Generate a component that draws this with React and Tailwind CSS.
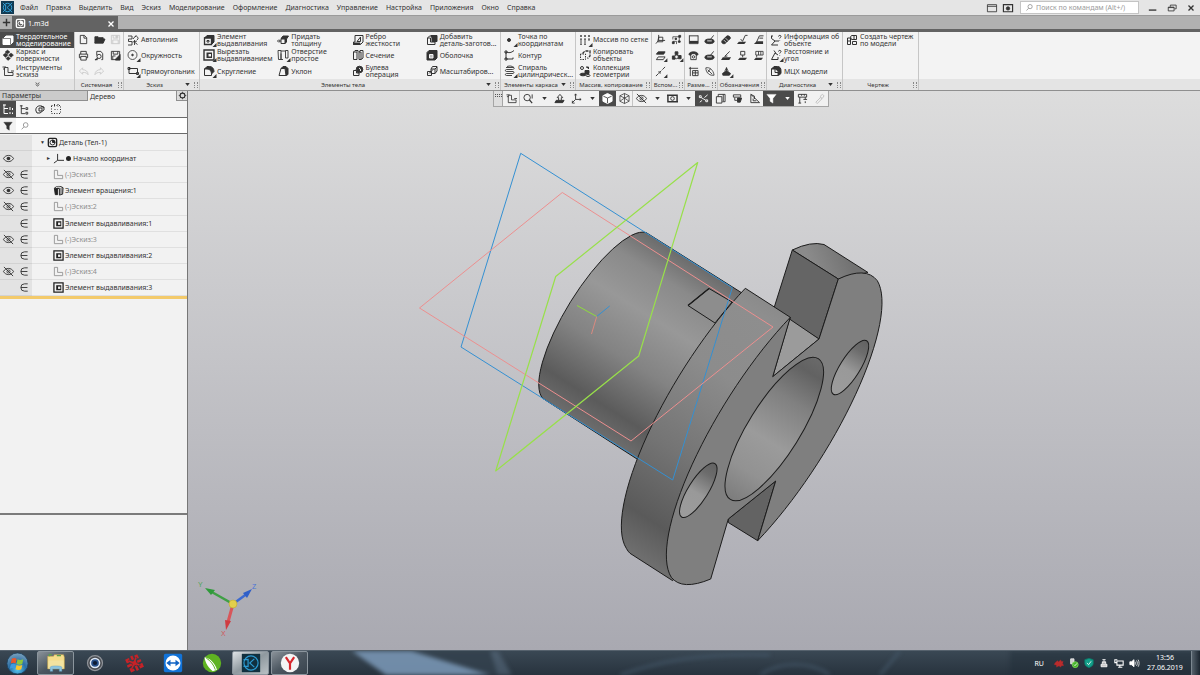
import clsx from 'clsx';

// 12x12 drawings, stroked with the current colour
const icons = {
  solid: (
    <>
      <path d="M1.5 4.5 4 2h7v6l-2.5 2.5" fill="currentColor" />
      <path d="M1 4.5h7v6H1z" fill="currentColor" />
      <path d="M1 4.5h7.5v6" stroke="#4b4b4b" strokeWidth=".7" />
    </>
  ),
  surfaces: <path d="m5.5 1 2.5 2-2.500 2L3 3zM9 4l2.500 2L9 8.500 6.500 6zM3.500 4 6 6 3.500 8.500 1 6zM6 7.500l2.500 2L6 11.500l-2-2z" fill="currentColor" strokeWidth=".4" />,
  sketchTools: <path d="M2.5 2.500v8h8.500V7.500H6V2.500zM.500 2h3.500M1 4h2M9 6h3" strokeWidth=".9" />,
  fileNew: <path d="M2.5 1.5H7L9.500 4v6.500h-7zM6.500 1.500v3h3" />,
  folder: <path d="M1 10V3h3.500l1 1H10v1.500M1 10l2-4.500h9L10 10z" fill="currentColor" />,
  save: (
    <>
      <path d="M1.5 1.5h9v9h-9zM3.5 1.5v3h5v-3M3 10.5v-4h6v4" />
      <path d="M6.5 2H8v2H6.500z" fill="currentColor" />
    </>
  ),
  print: <path d="M3 4.5v-3h6v3M3 8.5H1.5v-4h9v4H9M3 7h6v4H3z" />,
  preview: (
    <>
      <path d="M3 6V1.5h4.500L9.500 4v6.500H8M1 10.500h3" />
      <circle cx="5.5" cy="7" r="2.3" />
      <path d="m4 9-2.500 2" strokeWidth="1.5" />
    </>
  ),
  saveAs: (
    <>
      <path d="M1.5 1.5h9v9h-9zM3.5 1.5v3h5v-3M3 10.5v-4h3" />
      <path d="m6 10 5-5v6H6z" fill="currentColor" />
    </>
  ),
  undo: <path d="M5 2 1.5 5.5 5 9V7c3 0 5 .5 6 2.5C11 6 8.5 4 5 4z" />,
  redo: <path d="m7 2 3.500 3.500L7 9V7c-3 0-5 .5-6 2.500C1 6 3.500 4 7 4z" />,
  autoline: <path d="M1 2h4v3H1.500v2.500H5V11H1M6 5l3-3.500M5.500 8 10 7M8 2.500a2 2 0 1 1 2 3.500M8 8.500l2.500 2M7.500 11V6" strokeWidth=".9" />,
  circle: (
    <>
      <circle cx="5.5" cy="6" r="4.5" strokeWidth=".8" />
      <circle cx="5.5" cy="6" r=".8" fill="currentColor" />
    </>
  ),
  rect: <path d="M2 3.500h8.500v5H2zM1 2.500h2v2H1zM9.500 7.500h2v2h-2z" />,
  extrude: (
    <>
      <path d="M1.5 4 4 1.5h7V8l-2.500 2.500V4z" fill="currentColor" />
      <path d="M1.5 4h7v6.500h-7z" fill="#f3f3f3" strokeWidth="1.300" />
      <path d="M4 6.500h2v1.500H4z" />
    </>
  ),
  cutExtrude: (
    <>
      <path d="M1 1h10v10H1z" fill="#f3f3f3" strokeWidth="1.400" />
      <path d="M3.500 3.500h5.500V9H3.500z" fill="currentColor" stroke="none" />
      <path d="M5.500 5H8v2.500H5.500z" fill="#f3f3f3" stroke="none" />
    </>
  ),
  fillet: (
    <>
      <path d="M1.5 4 4 1.5h2.500C9.500 1.500 11 4 11 6.500L8.500 9C8.500 6 7 4 4.500 4z" fill="currentColor" />
      <path d="M1.5 10.500V4H4c3 0 4.500 2 4.500 5v1.500z" fill="#f3f3f3" />
    </>
  ),
  thicken: (
    <>
      <path d="M4 4.500 6 2h5.500l-2 3v3L8 9.500V5z" fill="currentColor" />
      <path d="M4 5h4v4.500H4zM0 7h3M2 5.500 3.500 7 2 8.500" fill="#f3f3f3" />
    </>
  ),
  hole: <path d="M1 1.500h3v9H1.500zM8.500 1.500H11V9H8.500zM4 4.500v6h2M4 2h4.500" strokeWidth=".9" />,
  draft: (
    <>
      <path d="M4 3.500 6 1.500h3l2 2v6l-2 1-1-7z" fill="currentColor" />
      <path d="m2 10.500 2-7h4l1 7z" fill="#f3f3f3" />
    </>
  ),
  rib: (
    <>
      <path d="M3 1.500h8V8l-2.500 2.500h-7V8H3z" />
      <path d="M5 7.500 8.500 3v4.500z" />
      <path d="M1.500 9H8v1.500H1.500z" fill="currentColor" />
    </>
  ),
  section: <path d="M1.500 3h3.500v7.500H1.500zM1.500 3 3 1.500h3V3M7 3h2v7.500H7zM7 3l1-1.500h3V9l-2 1.500" />,
  boolean: (
    <>
      <circle cx="7.500" cy="4.500" r="3.300" fill="currentColor" />
      <path d="M1.500 5.500h3V8H7v2.500H1.500z" fill="#f3f3f3" />
      <path d="M7 3a2.500 2.500 0 0 1 1.500 3" stroke="#f3f3f3" />
    </>
  ),
  addPart: (
    <>
      <path d="M1.500 4 3.500 2H6" />
      <path d="M5 1.500h6v6H6V4z" fill="currentColor" />
      <path d="M1.500 4h3v4h4.500v2.500H1.500z" fill="#f3f3f3" />
    </>
  ),
  shell: (
    <>
      <path d="M1 3.500 3 1.500h8V9l-2 2H1z" fill="currentColor" />
      <path d="M3.500 5.500h3.500V9H3.500z" fill="#bbb" stroke="#f3f3f3" />
    </>
  ),
  scale: <path d="M1.500 6.500h4v4h-4zM5 4l1.500-2.500H11V6L9 8.500H5zM5 4h4v4.500M9 4l2-2M3 8.500l4-4" />,
  point: <circle cx="5" cy="6" r="1.500" fill="currentColor" />,
  contour: <path d="M2 3c3 1 5 1 8-1.500M2 3v7h7V8.500M1 2h2v2H1zM1 9h2v2H1z" />,
  spiral: <path d="M2 2.500h7.500c1 0 1 2-1 2h-6c-1.500 0-1.500 2 0 2H9c1.500 0 1 2 0 2H2.500c-1.500 0-1.500 2 0 2H8M3 1.500c3-1 5-.5 7 1" strokeWidth=".9" />,
  gridArray: <path d="M1 2h2M5 2h2M9 2h2M1 6h2M5 6h2M9 6h2M1 10h2M5 10h2M2 1v10M6 1v10M10 1v6" strokeDasharray="2 1" strokeWidth=".9" />,
  copy: (
    <>
      <path d="M1.500 5v5.500h5V5z" strokeDasharray="1.500 1" />
      <path d="M3.500 4.500 6 2h5v5L8.500 9.500" strokeWidth="1.300" strokeDasharray="3 1" />
    </>
  ),
  collection: (
    <>
      <circle cx="3" cy="3" r="1.500" />
      <path d="M7 2h2.500v2M6 5.500h4v3H6z" fill="currentColor" />
      <ellipse cx="4" cy="9.500" rx="3" ry="1.300" fill="currentColor" />
      <ellipse cx="9" cy="10.500" rx="2" ry="1" />
    </>
  ),
  axisPoint: <path d="M4 1v6l-3 3.500M4 7h7M4 3.500h4.500v5H3z" />,
  localCs: (
    <>
      <path d="M2 6V3h7M2 8h4v3M9 3v6" strokeWidth=".8" />
      <path d="M8.500 1.500h2v2h-2zM1.500 8.500h2v2h-2zM8 7.500h2v1.500H8zM4.500 4.500H6V6H4.500z" fill="currentColor" />
    </>
  ),
  offsetPlane: (
    <>
      <path d="M3.500 2H11L9.500 4.500h-8z" fill="currentColor" />
      <path d="M3.500 7.500H11L9 10.500H1.500z" />
    </>
  ),
  control: (
    <>
      <path d="M4.500 2h3v3h-3zM1.500 6.500h3V10h-3zM8 6h3v3.500H8z" fill="currentColor" />
      <circle cx="6" cy="7.500" r="2" fill="#f3f3f3" />
    </>
  ),
  lineAxis: <path d="m1 11 3-3M5 7l2-2M8 4l3-3M3.500 6.500h2v2" />,
  linear: (
    <>
      <path d="M1.500 1.500v9h9.500v-9M1.500 2H11" />
      <path d="M1.500 7.500H11V10H1.500z" fill="currentColor" stroke="none" />
    </>
  ),
  diameter: (
    <>
      <ellipse cx="6" cy="8" rx="5" ry="2.500" fill="currentColor" />
      <path d="M3.500 7.500h5" stroke="#eee" />
      <path d="m7 6 3.500-4.500" />
    </>
  ),
  phone: (
    <>
      <path d="M1 5c0-4 10-4 10 0L9 6 8 4H4L3 6z" fill="currentColor" />
      <path d="M3 6v4.500h6V6" />
      <circle cx="6" cy="7.500" r="1.300" />
    </>
  ),
  dimTable: <path d="M1 2.500h10M2.500 1v10M5 5h6v5.500H5zM5 7.500h6M8 5v5.500" />,
  leaf: <path d="M2 2c4-1 8 2 9 8-4 1-9-2-9-8zM4 4l5 5M7 3 4 7" strokeWidth=".9" />,
  thread: (
    <>
      <path d="M1 7.500 6 2.500c1.500-1.500 5 .5 4 2.500l-5 5C3 11.500 0 10 1 7.500z" fill="currentColor" />
      <path d="m3 6.500 3 3M5 4.500l3 3" stroke="#ccc" />
    </>
  ),
  rough: (
    <>
      <path d="M4 5.500 6 8l3-6.500h2.500" />
      <path d="M2 8.500h8L8 11H0z" fill="currentColor" stroke="none" />
    </>
  ),
  leader: (
    <>
      <path d="M4 8.500 7 2h4.500M7 4.500h4" />
      <path d="M4 8h7v3H1z" fill="currentColor" stroke="none" />
    </>
  ),
  mark: (
    <>
      <path d="M4 7 9.500 1.500M4 7l3-.5" />
      <path d="M2 8h9l-2 3H0z" fill="currentColor" stroke="none" />
    </>
  ),
  base: (
    <>
      <path d="M4 1.500h4.500v4H4zM6.200 5.500V8" />
      <path d="M3 8.500h8l-2 2.500H1z" fill="currentColor" stroke="none" />
    </>
  ),
  tolerance: (
    <>
      <path d="M3 1.500h8v4H3zM6 1.500v4M8.500 1.500v4M4 5.500V8" strokeWidth=".9" />
      <path d="M3 8.500h8l-2 2.500H1z" fill="currentColor" stroke="none" />
    </>
  ),
  flatPattern: (
    <>
      <path d="M6 1.500v5M4 6l2-4 2 4z" />
      <path d="M1 8.500 3 6.500h6l2 2-2 2H2z" fill="currentColor" stroke="none" />
    </>
  ),
  info: <path d="M1.500 2v2.500L5 7h4M5 7l-3.500 4H8M1 2h2M8.500 2.500c0-1.500 2.500-1.500 2.500 0 0 1-1.300 1-1.300 2M9.700 6v.5" />,
  distance: <path d="M1.500 10.500 5 4l3 2M1.500 10.500H8V8M4 1.500l2 3M8.500 2.500c0-1.500 2.500-1.500 2.500 0 0 1-1.300 1-1.300 2M9.700 6v.5" />,
  mass: (
    <>
      <path d="M1.500 4 4 1.500h3.500c2.500 0 3.500 2 3.500 4v3l-2.500 2V7L6 4z" fill="currentColor" />
      <path d="M1.500 4H5v3.500h3v3H1.500z" fill="#f3f3f3" />
    </>
  ),
  drawing: <path d="M1.500 4h3v6.500h-3zM1.500 7h3M4.500 3l1-1.500h5v4h-5zM6.500 7.500h4v3h-4zM8 1.500v4" />,
  part: (
    <>
      <rect x="1.500" y="1.500" width="9" height="9" rx="1.500" strokeWidth="1.500" />
      <circle cx="6" cy="6" r="2.700" />
      <path d="M6 6V3.300A2.700 2.700 0 0 1 8.700 6z" fill="currentColor" />
    </>
  ),
  sketch: <path d="M1.500 1.500h3.500v5.500h5.500v3.500h-9z" strokeWidth=".9" />,
  revolve: (
    <>
      <path d="M2 3c2-2 7-2 9 0l-.5 7L7 11V4L2 3z" fill="#999" />
      <path d="M1.500 3.500H5v7H2.500z" fill="currentColor" />
      <path d="M3 3c2-1 4-1 6 0" stroke="#eee" />
    </>
  ),
  treeFull: <path d="M2 1.500v9h4M2 5.500h4M8 4v3M8 9v2M10.500 5v2M10.500 9.500v1.500M1 2h3" />,
  tree: <path d="M2.500 1.500v9h4M2.500 5h4M1 2h3M7.500 4h2v2h-2zM7.500 9h2v2h-2z" />,
  bodies: <path d="M2 8c-1-3 2-6 5-5l3 1v3l-4 3H3zM5 5h3v3H5zM7 3l3 2" />,
  zones: <path d="M1.500 2.500h9v8h-9zM4.500 1v3M8 1v3M4.500 6.500h3" strokeDasharray="1 1.500" />,
  funnel: <path d="M1 1.500h10L7.500 6v5l-3-2V6z" fill="currentColor" strokeWidth=".5" />,
  loupe: (
    <>
      <circle cx="6.800" cy="4.800" r="2.800" />
      <path d="M4.800 7 2 10" />
    </>
  ),
  eye: (
    <>
      <path d="M.500 6c2.500-4.500 8.500-4.500 11 0-2.500 4.500-8.500 4.500-11 0z" />
      <circle cx="6" cy="6" r="2" fill="currentColor" stroke="none" />
    </>
  ),
  eyeOff: (
    <>
      <path d="M.500 6c2.500-4.500 8.500-4.500 11 0-2.500 4.500-8.500 4.500-11 0zM1 1l10 10" />
      <circle cx="6" cy="6" r="1.700" />
    </>
  ),
  member: <path d="M9.500 2H6a4 4 0 0 0 0 8h3.500M2.200 6h7" />,
  gear: (
    <>
      <circle cx="6" cy="6" r="3.200" strokeWidth="1.500" />
      <path d="M6 1v2M6 9v2M1 6h2M9 6h2M2.500 2.500l1.300 1.300M8.200 8.200l1.300 1.300M9.500 2.500 8.200 3.800M3.800 8.200 2.500 9.500" />
    </>
  ),
  origin: <path d="M5 1v7l-4 3M5 8h7" />,
  zoomFit: (
    <>
      <circle cx="4.500" cy="5" r="3.500" />
      <path d="M7 7.500 10 11" strokeWidth="1.400" />
      <path d="M10 1.500V6" />
    </>
  ),
  orient: (
    <>
      <path d="M1 10.500 2.500 8H11l-1.500 2.500z" fill="currentColor" />
      <path d="M5 8V5H3.500l3-3.500 3 3.500H8v3z" fill="#f1f1f1" />
    </>
  ),
  axes: <path d="M5 1v6l-4 4M5 7h6M4 2.500 5 1l1 1.500M9.500 6 11 7 9.500 8M1.500 8.500V11H4" />,
  cube: (
    <>
      <path d="M6 .5 11 3v6l-5 2.500L1 9V3z" fill="currentColor" />
      <path d="M1.500 3.500 6 5.500l4.500-2M6 5.500V11" stroke="#4b4b4b" />
    </>
  ),
  wireCube: <path d="M6 .5 11 3v6l-5 2.500L1 9V3zM1 3l5 2.500L11 3M6 5.500v6M6 .5v5M1 9l5-3.500L11 9" strokeWidth=".8" />,
  camera: (
    <>
      <path d="M1 2.500h10v7H1zM0 2.500h2M10 9.500h2" strokeWidth="1.600" />
      <circle cx="6" cy="6" r="2" />
    </>
  ),
  scissors: <path d="M1.500 3h2v2h-2zM8.500 7.500h2v2h-2zM3.500 5l5 3M2 10l2.500-2M7 5l3.500-3" />,
  box: <path d="M1.500 4h6v7h-6zM3.500 4V1.500H11v8H8M9 1.500V9" />,
  mixed: (
    <>
      <path d="M1.500 2h8v2.500h-8zM3 5v3h3" />
      <path d="M6 5.500h4.500L9 10H6z" fill="currentColor" />
    </>
  ),
  corner: <path d="M2 1.500v9h9.500zM4.500 6v2.500H8M2 1.500l4 2v3" />,
  ruler: <path d="M1.500 1.500h9v3h-9zM3 4.500V11M1.500 11h3M9 4.500V7M7 7h4M9 9v2M5 1.500V3M8 1.500V3" />,
  dropper: <path d="m2 10 5-5 1.500 1.500-5 5zM6.500 4 9 1.500l2 1.500-2 3z" />,
  panel: <path d="M.5 2h11v8.500H.5zM.5 4h11" />,
  panelEye: (
    <>
      <path d="M.5 2h11v8.500H.5z" strokeWidth="1.400" />
      <circle cx="6" cy="6.500" r="2" fill="currentColor" />
    </>
  ),
  minimize: <path d="M1 8.500h9" strokeWidth="1.600" />,
  restore: <path d="M1.500 5h7v4.500h-7zM4 4.500v-2h7V7H9M1.500 5.500h7" />,
  close: <path d="m3 3 6 6M9 3 3 9" strokeWidth="1.600" />,
  plus: <path d="M6 2v8M2 6h8" strokeWidth="1.600" />,
  chevrons: <path d="M3.500 3.500 6 5.500l2.500-2M3.500 6 6 8l2.500-2" />,
  shield: (
    <>
      <path d="M6 .5 11 2v4.500c0 2.500-2.500 4-5 5-2.500-1-5-2.500-5-5V2z" fill="#14a08a" stroke="#0a7d6c" />
      <path d="m3.500 6 2 2 3-4" stroke="#fff" />
    </>
  ),
  usb: (
    <>
      <path d="M2 1h4v6H2z" fill="#ccc" stroke="#eee" />
      <circle cx="7.500" cy="8" r="3.500" fill="#43b02a" stroke="#7ddb58" />
      <path d="m6 8 1.200 1.200 2.300-2.700" stroke="#fff" />
    </>
  ),
  router: <path d="M2.500 7.500h7v3h-7zM4 7V4.500h4V7M6 4V1.500M4 2h4" fill="#ccc" />,
  monitor: <path d="M3.500 3.500H11v5H3.500zM7 8.500V11M5 11h5M1 1.500v4h2M1 2h3" strokeWidth="1.300" />,
  speaker: (
    <>
      <path d="M1 4.500h2L6 2v8.500L3 8H1z" fill="currentColor" />
      <path d="M7.500 4.500V8M9 3c1.300 2 1.300 4.500 0 6.500M11 2c1.500 3 1.500 6 0 8.500" strokeWidth=".9" />
    </>
  ),
  splat: <path d="m1 6 3-3 1.500 1.500L8 2l1 2h2l-.5 3L12 9l-3 .5L8 11l-2-1.500L3 11l-.5-2.500L0 8z" fill="#b92c2c" stroke="#7c2530" strokeWidth=".8" strokeDasharray="1 1" />,
};

const Icon = ({ name, sub, className = 'w-3 h-3' }) => (
  <svg viewBox="0 0 12 12" className={clsx('shrink-0 overflow-visible', className)} fill="none" stroke="currentColor" aria-hidden="true">
    {icons[name]}
    {sub && <path d="M13.500 9v4h-4z" fill="currentColor" stroke="none" />}
  </svg>
);

const Caret = () => (
  <svg viewBox="0 0 6 4" className="w-[5px] h-[3px] shrink-0" aria-hidden="true">
    <path d="M0 0h6L3 4z" fill="currentColor" />
  </svg>
);

const menus = ['Файл', 'Правка', 'Выделить', 'Вид', 'Эскиз', 'Моделирование', 'Оформление', 'Диагностика', 'Управление', 'Настройка', 'Приложения', 'Окно', 'Справка'];

const modes = [
  { label: 'Твердотельное\nмоделирование', icon: 'solid', active: true },
  { label: 'Каркас и\nповерхности', icon: 'surfaces' },
  { label: 'Инструменты\nэскиза', icon: 'sketchTools' },
];

// Items fill the columns from top to bottom
const groups = [
  {
    title: 'Системная', width: 'w-[49px]', cols: 'grid-cols-3',
    tools: [
      ['fileNew', 'Создать'], ['print', 'Печать'], ['undo', 'Отменить', 'off'],
      ['folder', 'Открыть'], ['preview', 'Просмотр'], ['redo', 'Повторить', 'off'],
      ['save', 'Сохранить', 'off'], ['saveAs', 'Сохранить как'],
    ],
  },
  {
    title: 'Эскиз', width: 'w-[76px]', caret: true, cols: 'grid-cols-1',
    items: [['autoline', 'Автолиния'], ['circle', 'Окружность', true], ['rect', 'Прямоугольник', true]],
  },
  {
    title: 'Элементы тела', width: 'w-[301px]', caret: true, cols: 'grid-cols-4',
    items: [
      ['extrude', 'Элемент\nвыдавливания', true], ['cutExtrude', 'Вырезать\nвыдавливанием', true], ['fillet', 'Скругление', true],
      ['thicken', 'Придать\nтолщину'], ['hole', 'Отверстие\nпростое', true], ['draft', 'Уклон'],
      ['rib', 'Ребро\nжесткости'], ['section', 'Сечение'], ['boolean', 'Булева\nоперация'],
      ['addPart', 'Добавить\nдеталь-заготов...'], ['shell', 'Оболочка'], ['scale', 'Масштабиров...'],
    ],
  },
  {
    title: 'Элементы каркаса', width: 'w-[75px]', caret: true, cols: 'grid-cols-1',
    items: [['point', 'Точка по\nкоординатам', true], ['contour', 'Контур'], ['spiral', 'Спираль\nцилиндрическ...', true]],
  },
  {
    title: 'Массив, копирование', width: 'w-[76px]', cols: 'grid-cols-1',
    items: [['gridArray', 'Массив по сетке', true], ['copy', 'Копировать\nобъекты'], ['collection', 'Коллекция\nгеометрии']],
  },
  {
    title: 'Вспом...', width: 'w-[33px]', cols: 'grid-cols-2',
    tools: [['axisPoint', 'Плоскость'], ['offsetPlane', 'Смещенная плоскость', 'sub'], ['lineAxis', 'Ось', 'sub'], ['localCs', 'Локальная СК'], ['control', 'Контрольная точка', 'sub']],
  },
  {
    title: 'Разме...', width: 'w-[33px]', cols: 'grid-cols-2',
    tools: [['linear', 'Линейный размер'], ['phone', 'Угловой размер'], ['dimTable', 'Таблица размеров'], ['diameter', 'Диаметральный размер'], ['diameter', 'Радиальный размер'], ['leaf', 'Размер дуги']],
  },
  {
    title: 'Обозначения', width: 'w-[49px]', cols: 'grid-cols-3',
    tools: [
      ['thread', 'Условная резьба'], ['mark', 'Клеймение'], ['flatPattern', 'База', 'sub'],
      ['rough', 'Шероховатость'], ['base', 'Обозначение базы'], null,
      ['leader', 'Линия-выноска'], ['tolerance', 'Допуск формы'],
    ],
  },
  {
    title: 'Диагностика', width: 'w-[76px]', caret: true, cols: 'grid-cols-1',
    items: [['info', 'Информация об\nобъекте'], ['distance', 'Расстояние и\nугол', true], ['mass', 'МЦХ модели']],
  },
  {
    title: 'Чертеж', width: 'w-[76px]', cols: 'grid-cols-1',
    items: [['drawing', 'Создать чертеж\nпо модели']],
  },
];

const treeRows = [
  { label: 'Деталь (Тел-1)', icon: 'part', root: true },
  { label: 'Начало координат', icon: 'origin', origin: true, vis: 'eye' },
  { label: '(-)Эскиз:1', icon: 'sketch', muted: true, vis: 'eyeOff', member: true },
  { label: 'Элемент вращения:1', icon: 'revolve', vis: 'eye', member: true },
  { label: '(-)Эскиз:2', icon: 'sketch', muted: true, vis: 'eyeOff', member: true },
  { label: 'Элемент выдавливания:1', icon: 'cutExtrude', member: true },
  { label: '(-)Эскиз:3', icon: 'sketch', muted: true, vis: 'eyeOff', member: true },
  { label: 'Элемент выдавливания:2', icon: 'cutExtrude', member: true },
  { label: '(-)Эскиз:4', icon: 'sketch', muted: true, vis: 'eyeOff', member: true },
  { label: 'Элемент выдавливания:3', icon: 'cutExtrude', member: true },
];

const viewTools = [
  { icon: 'sketchTools', label: 'Эскиз', line: true },
  { icon: 'zoomFit', label: 'Масштаб' },
  { caret: true, label: 'Варианты масштаба' },
  { icon: 'orient', label: 'Нормально к' },
  { icon: 'axes', label: 'Ориентация' },
  { caret: true, label: 'Варианты ориентации' },
  { icon: 'cube', label: 'Полутоновое', dark: true },
  { icon: 'wireCube', label: 'Каркас', line: true },
  { icon: 'eyeOff', label: 'Скрыть' },
  { caret: true, label: 'Варианты скрытия' },
  { icon: 'camera', label: 'Вид' },
  { caret: true, label: 'Варианты вида' },
  { icon: 'scissors', label: 'Упрощение', dark: true },
  { icon: 'box', label: 'Сечение' },
  { icon: 'mixed', label: 'Отображение' },
  { icon: 'corner', label: 'Перспектива' },
  { icon: 'funnel', label: 'Фильтр', dark: true },
  { caret: true, label: 'Варианты фильтра', dark: true },
  { icon: 'ruler', label: 'Измерения' },
  { icon: 'dropper', label: 'Копировать свойства', off: true },
];

const MenuBar = () => (
  <header className="flex items-center h-4 shrink-0 bg-[#e5e5e5] border-b border-[#9b9b9b]">
    <svg viewBox="0 0 14 14" className="w-[13px] h-[13px] ml-px shrink-0" fill="none" stroke="#35a5dc" aria-hidden="true">
      <path d="M0 0h14v14H0z" fill="#123a52" stroke="none" />
      <circle cx="7" cy="7" r="4.500" />
      <path d="M2 2l3 3M12 2 6.500 7l5.500 5M5 4v6M2 12l3-3" />
    </svg>
    <nav className="flex gap-2 ml-[6px]">
      {menus.map((m) => (
        <button key={m} className="leading-[14px] whitespace-nowrap">{m}</button>
      ))}
    </nav>
    <div className="flex items-center ml-auto">
      <button className="w-4 flex justify-center" aria-label="Панель"><Icon name="panel" className="w-[10px] h-[10px]" /></button>
      <button className="w-4 flex justify-center" aria-label="Панель просмотра"><Icon name="panelEye" className="w-[10px] h-[10px]" /></button>
      <label className="flex items-center w-[119px] h-[13px] ml-1 mr-1 pl-1 gap-[2px] bg-white border border-[#c4c4c4] text-[#8a8a8a]">
        <Icon name="loupe" className="w-[9px] h-[9px]" />
        <input aria-label="Поиск по командам" placeholder="Поиск по командам (Alt+/)" className="min-w-0 flex-1 leading-[11px] outline-none placeholder:text-[#9a9a9a]" />
      </label>
      <button className="w-[19px] flex justify-center" aria-label="Свернуть"><Icon name="minimize" className="w-[10px] h-[10px]" /></button>
      <button className="w-[19px] flex justify-center" aria-label="Восстановить"><Icon name="restore" className="w-[10px] h-[10px]" /></button>
      <button className="w-[19px] flex justify-center" aria-label="Закрыть"><Icon name="close" className="w-[10px] h-[10px]" /></button>
    </div>
  </header>
);

const DocumentTabs = () => (
  <div className="flex h-4 shrink-0 bg-[#b1b1b1] border-b-[3px] border-[#636363]">
    <button className="w-3 flex items-center justify-center" aria-label="Новый документ"><Icon name="plus" className="w-[11px] h-[11px]" /></button>
    <div className="flex items-center w-[106px] h-[15px] pl-[3px] gap-[2px] bg-[#636363] text-white">
      <Icon name="part" className="w-[11px] h-[11px]" />
      <button className="leading-[14px]">1.m3d</button>
      <button className="ml-auto mr-[2px]" aria-label="Закрыть вкладку"><Icon name="close" className="w-[10px] h-[10px]" /></button>
    </div>
  </div>
);

const RibbonGroup = ({ group }) => (
  <section className={clsx('flex flex-col shrink-0 border-r border-[#c6c6c6]', group.width)}>
    <div className={clsx('grid grid-rows-3 grid-flow-col h-[47px]', group.cols, group.items ? 'pl-[3px]' : 'pl-px')}>
      {group.items?.map(([icon, label, sub]) => (
        <button key={label} className="flex items-center gap-[2px] min-w-0 text-left">
          <Icon name={icon} sub={sub} />
          <span className="whitespace-pre leading-[7px]">{label}</span>
        </button>
      ))}
      {group.tools?.map((tool, i) =>
        tool ? (
          <button key={i} aria-label={tool[1]} className={clsx('flex items-center justify-center', tool[2] === 'off' && 'text-[#cbcbcb]')}>
            <Icon name={tool[0]} sub={tool[2] === 'sub'} className="w-[11px] h-[11px]" />
          </button>
        ) : (
          <span key={i} />
        )
      )}
    </div>
    <div className="flex items-center h-[11px] pr-px bg-[#e4e4e4] text-[6px] leading-[10px]">
      <span className="flex-1 text-center whitespace-nowrap">{group.title}</span>
      {group.caret && <button aria-label={`Еще: ${group.title}`} className="w-[9px]"><Caret /></button>}
      <span className="w-[4px] h-[6px] shrink-0 border-x border-dotted border-[#888]" />
    </div>
  </section>
);

const Ribbon = () => (
  <div className="flex shrink-0 bg-[#f3f3f3] border-b border-[#8f8f8f]">
    <div className="w-[75px] shrink-0 flex flex-col border-r border-[#c6c6c6]">
      <div className="grid grid-rows-3 h-[47px]">
        {modes.map((mode) => (
          <button key={mode.label} className={clsx('flex items-center gap-[2px] pl-[2px] text-left', mode.active && 'bg-[#4b4b4b] text-white')}>
            <Icon name={mode.icon} />
            <span className="whitespace-pre leading-[7px]">{mode.label}</span>
          </button>
        ))}
      </div>
      <button className="flex items-center justify-center h-[11px] bg-[#e4e4e4]" aria-label="Развернуть"><Icon name="chevrons" className="w-[9px] h-[9px]" /></button>
    </div>
    {groups.map((group) => (
      <RibbonGroup key={group.title} group={group} />
    ))}
    <div className="flex-1 flex flex-col justify-end">
      <div className="h-[11px] bg-[#e4e4e4]" />
    </div>
  </div>
);

const TreeRow = ({ row }) => (
  <li className="flex items-stretch">
    <span className="w-4 flex items-center justify-center bg-[#e3e3e3] border-b border-[#d2d2d2]">
      {row.vis && <Icon name={row.vis} className="w-[11px] h-[11px]" />}
    </span>
    <span className="w-4 flex items-center justify-center bg-[#e3e3e3] border-b border-[#d2d2d2]">
      {row.member && <Icon name="member" className="w-[11px] h-[11px]" />}
    </span>
    <button
      className={clsx(
        'flex-1 flex items-center border-b border-[#e0e0e0] text-left whitespace-nowrap',
        row.root ? 'pl-2 gap-px' : row.origin ? 'pl-[14px] gap-px' : 'pl-[21px] gap-px',
        row.muted && 'text-[#8d8d8d]'
      )}
    >
      {row.root && <span className="w-[6px] text-[5px]">▼</span>}
      {row.origin && <span className="w-[6px] text-[5px]">►</span>}
      <Icon name={row.icon} className={row.muted ? 'w-[11px] h-[11px]' : 'w-[11px] h-[11px] text-[#222]'} />
      {row.origin && <span className="w-[5px] h-[5px] mx-px rounded-full bg-[#222]" />}
      {row.label}
    </button>
  </li>
);

const Sidebar = () => (
  <aside className="w-[188px] shrink-0 flex flex-col bg-[#f2f2f2] border-r border-[#777]">
    <div className="flex h-[10px] leading-[9px]">
      <button className="w-[88px] pl-[2px] text-left bg-[#cbcbcb] border-r border-b border-[#8f8f8f]">Параметры</button>
      <button className="flex-1 pl-[2px] text-left">Дерево</button>
      <button className="w-[11px] flex items-center justify-center border-l border-b border-[#8f8f8f] bg-[#dcdcdc]" aria-label="Настройки"><Icon name="gear" className="w-[9px] h-[9px]" /></button>
    </div>
    <div className="flex h-[17px] border-b border-[#6b6b6b]">
      <button className="w-4 flex items-center justify-center bg-[#4b4b4b] text-white" aria-label="Структура"><Icon name="treeFull" /></button>
      <button className="w-4 flex items-center justify-center" aria-label="Последовательность"><Icon name="tree" className="w-[11px] h-[11px]" /></button>
      <button className="w-4 flex items-center justify-center" aria-label="Тела"><Icon name="bodies" /></button>
      <button className="w-4 flex items-center justify-center" aria-label="Зоны"><Icon name="zones" /></button>
    </div>
    <div className="flex h-4 bg-white border-b border-[#6b6b6b]">
      <button className="w-4 flex items-center justify-center bg-[#f2f2f2]" aria-label="Фильтр дерева"><Icon name="funnel" className="w-[10px] h-[10px]" /></button>
      <label className="flex-1 flex items-center gap-1 pl-1 text-[#8a8a8a]">
        <Icon name="loupe" className="w-[10px] h-[10px]" />
        <input aria-label="Поиск в дереве" className="flex-1 min-w-0 outline-none" />
      </label>
    </div>
    <ul className="grid grid-rows-10 h-[162px] pt-px">
      {treeRows.map((row) => (
        <TreeRow key={row.label} row={row} />
      ))}
    </ul>
    <div className="h-[3px] bg-[#f3ca6b]" />
    <div className="flex-1" />
    <div className="h-[137px] border-t-2 border-[#7b7b7b]" />
  </aside>
);

const Model = () => (
  <svg viewBox="188 91 1012 559" preserveAspectRatio="xMinYMin meet" className="absolute inset-0 w-full h-full" fill="none" stroke="#1c1c1c" strokeLinejoin="round" role="img" aria-label="Модель детали">
    <defs>
      <linearGradient id="boss" gradientUnits="userSpaceOnUse" x1="692" y1="262" x2="588" y2="428">
        <stop offset="0" stopColor="#6c6c6c" />
        <stop offset=".15" stopColor="#8a8a8a" />
        <stop offset=".35" stopColor="#989898" />
        <stop offset=".6" stopColor="#838383" />
        <stop offset=".86" stopColor="#5b5b5b" />
        <stop offset="1" stopColor="#6d6d6d" />
      </linearGradient>
      <linearGradient id="rim" gradientUnits="userSpaceOnUse" x1="849" y1="264" x2="655" y2="566">
        <stop offset="0" stopColor="#777" />
        <stop offset=".25" stopColor="#8e8e8e" />
        <stop offset=".45" stopColor="#8c8c8c" />
        <stop offset=".7" stopColor="#747474" />
        <stop offset=".9" stopColor="#5a5a5a" />
        <stop offset="1" stopColor="#6e6e6e" />
      </linearGradient>
      <linearGradient id="tooth" gradientUnits="userSpaceOnUse" x1="812" y1="268" x2="848" y2="254">
        <stop offset="0" stopColor="#8b8b8b" />
        <stop offset="1" stopColor="#727272" />
      </linearGradient>
      <linearGradient id="bore">
        <stop offset="0" stopColor="#7c7c7c" />
        <stop offset=".2" stopColor="#929292" />
        <stop offset=".42" stopColor="#9b9b9b" />
        <stop offset=".7" stopColor="#808080" />
        <stop offset=".9" stopColor="#626262" />
        <stop offset="1" stopColor="#6a6a6a" />
      </linearGradient>
      <linearGradient id="bolt">
        <stop offset="0" stopColor="#9c9c9c" />
        <stop offset=".45" stopColor="#999" />
        <stop offset=".8" stopColor="#6c6c6c" />
        <stop offset="1" stopColor="#626262" />
      </linearGradient>
    </defs>

    {/* Boss */}
    <path d="M646 232.500A98 30 -58 0 0 543 398.500L637 459 742 293z" fill="url(#boss)" stroke="none" />
    <path d="M742 293 646 232.500A98 30 -58 0 0 543 398.500L637 459" />
    <path d="M709 288.500 688 305.500 715 323 732 302z" fill="#8d8d8d" />
    <path d="m709 288.500-21 17" strokeWidth="1.500" />

    {/* Right tooth */}
    <path d="M792.300 250Q811 241 824 244.500L868 272.500 838.300 279z" fill="url(#tooth)" />
    <path d="M792.300 250 838.300 279 819 339 789 320 774 308z" fill="#656565" />

    {/* Flange rim, notches and front face */}
    <path d="M789.500 319 819 339 772.700 376.700z" fill="#9b9b9b" />
    <path d="M728.300 519v3.500L757.700 540.700 775.700 481z" fill="#636363" />
    <path d="M745.300 288.300A183 55 -57.800 0 0 626.300 548.300Q628 551.500 630 553.300L672.700 580.700 700 540 790.300 317.300z" fill="url(#rim)" />
    <path
      d="M790.300 317.300A183 55 -57.800 0 0 671.300 577.300Q682 591 710.700 579L728.300 519 775.700 481 757.700 540.700A183 55 -57.800 0 0 877.300 280.700Q866 266 838.300 279L819 339 772.700 376.700z"
      fill="#7f7f7f"
    />
    <ellipse cx="774.300" cy="429" rx="83" ry="26" transform="rotate(-58 774.300 429)" fill="url(#bore)" />
    <ellipse cx="850" cy="367.500" rx="31.500" ry="10" transform="rotate(-58 850 367.500)" fill="url(#bolt)" />
    <ellipse cx="698.300" cy="490.300" rx="31.500" ry="10" transform="rotate(-58 698.300 490.300)" fill="url(#bolt)" />

    {/* Base planes and origin */}
    <path d="M520.700 153.300 732.300 287.700 672.700 480 461 347z" stroke="#3490d2" />
    <path d="M562.300 192.500 773 327 631 441 419.500 308z" stroke="#ec8f8f" />
    <path d="M697.700 162.500 555.700 276.500 495.700 471 638.700 356z" stroke="#98e04a" strokeWidth="1.200" />
    <path d="M596.700 316.500 577 305.500" stroke="#8edc3c" />
    <path d="M596.700 316.500 609.700 306" stroke="#3490d2" />
    <path d="M596.700 316.500 591.500 334" stroke="#d98a80" />
  </svg>
);

const AxisTriad = () => (
  <svg viewBox="0 0 64 60" className="absolute left-2 bottom-3 w-16 h-[60px]" fontFamily="Liberation Sans, sans-serif" fontSize="7" aria-hidden="true">
    <path d="M37 26 14 13" stroke="#3f9f45" strokeWidth="2.500" />
    <path d="m9 10 10 2-4 5z" fill="#2f9a3a" />
    <path d="M37 26 52 15" stroke="#3c6ad0" strokeWidth="2.500" />
    <path d="m56 11-9 4 4 5z" fill="#2f5fc8" />
    <path d="M37 26 32 44" stroke="#d8565a" strokeWidth="3" />
    <path d="m30 52-1-10 6 1z" fill="#d03b40" />
    <circle cx="37" cy="26" r="4" fill="#e3cf4b" stroke="#b9a52d" strokeWidth=".5" />
    <text x="2" y="9" fill="#4fa556">Y</text>
    <text x="56" y="11" fill="#4a74d6">Z</text>
    <text x="25" y="58" fill="#d0575b">X</text>
  </svg>
);

const Viewport = () => (
  <main className="relative flex-1 min-w-0 bg-linear-to-b from-[#dddddd] to-[#a9a9b1]">
    <Model />
    <div className="relative flex justify-center pr-[66px]">
      <div className="flex h-4 bg-[#f1f1f1] border border-t-0 border-[#a5a5a5]">
        <span className="w-[9px] flex justify-center pt-[3px] bg-[#dedede] border-r border-[#a5a5a5]">
          <span className="w-[7px] h-[3px] border-y border-dotted border-[#555]" />
        </span>
        {viewTools.map((tool) => (
          <button
            key={tool.label}
            aria-label={tool.label}
            className={clsx(
              'flex items-center justify-center',
              tool.caret ? 'w-[14px]' : 'w-[17px]',
              tool.dark && 'bg-[#4b4b4b] text-white',
              tool.line && 'border-r border-[#c4c4c4]',
              tool.off && 'text-[#c0c0c0]'
            )}
          >
            {tool.caret ? <Caret /> : <Icon name={tool.icon} className="w-[11px] h-[11px]" />}
          </button>
        ))}
      </div>
    </div>
    <AxisTriad />
  </main>
);

const apps = [
  {
    label: 'Проводник', open: true,
    art: (
      <>
        <path d="M2 4h7l1-2h11l1 3v14H2z" fill="#f5dd8b" stroke="#c9a545" strokeWidth=".6" />
        <path d="M4 4V2h3M13 3h5" stroke="#5aa04f" strokeWidth="1.500" />
        <path d="M3 9h18v10H3z" fill="#f3e3a0" />
        <path d="M5 22v-5c0-2 14-2 14 0v5h-3v-3H8v3z" fill="#8cc4e0" stroke="#5c9bbd" strokeWidth=".5" />
      </>
    ),
  },
  {
    label: 'Просмотр',
    art: (
      <>
        <circle cx="12" cy="12" r="9" fill="#4a4d52" stroke="#8f9399" strokeWidth="1.500" />
        <circle cx="12" cy="12" r="5.500" fill="#274e86" stroke="#dfe9f5" strokeWidth="1.800" />
        <circle cx="12" cy="12" r="2.500" fill="#0d1b33" />
      </>
    ),
  },
  {
    label: 'Утилита',
    art: (
      <g transform="rotate(-25 12 12)" fill="#c72227">
        <path d="M4 4h5v2H7v3H4zM11 3h3v5h-3zM16 4h4v5h-2V7h-2zM3 11h6v3H3zM10 10h5v5h-5zM16 11h5v3h-5zM4 16h3v2h2v3H4zM11 16h3v6h-3zM16 18h2v-2h3v5h-5z" />
        <path d="m7 7 10 10M17 7 7 17" stroke="#c72227" strokeWidth="2" />
      </g>
    ),
  },
  {
    label: 'TeamViewer',
    art: (
      <>
        <rect x="1" y="1" width="22" height="22" rx="2" fill="#1273d8" />
        <circle cx="12" cy="12" r="9" fill="#fff" />
        <path d="m4 12 5-4v3h6V8l5 4-5 4v-3H9v3z" fill="#1264c4" />
      </>
    ),
  },
  {
    label: 'CorelDRAW',
    art: (
      <>
        <circle cx="12" cy="12" r="11" fill="#5fb322" />
        <path d="M3 5c6 1 12 6 15 15l-5 2C8 18 4 12 3 5z" fill="#fff" />
        <path d="M5 6c5 3 9 8 11 14" stroke="#5fb322" strokeWidth="1.200" fill="none" />
      </>
    ),
  },
  {
    label: 'КОМПАС-3D', open: true, active: true,
    art: (
      <g fill="none" stroke="#2d9bd2" strokeWidth="1.400">
        <path d="M1 1h22v22H1z" fill="#10303f" stroke="none" />
        <circle cx="12" cy="12" r="8.500" />
        <path d="M8.500 7v10M16 7l-5.500 5 5.500 5M3 8h5M3 16h5" />
      </g>
    ),
  },
  {
    label: 'Yandex', open: true,
    art: (
      <>
        <circle cx="12" cy="12" r="11" fill="#f4f4f4" />
        <path d="m7 5 5 7.500L17 5M12 12v8" stroke="#d8262c" strokeWidth="2.600" fill="none" />
      </>
    ),
  },
];

const trayItems = [['splat', 'Защита'], ['usb', 'Устройства'], ['shield', 'Антивирус'], ['router', 'Модем'], ['monitor', 'Сеть'], ['speaker', 'Громкость']];

const Taskbar = () => (
  <footer className="relative flex items-center h-[25px] shrink-0 overflow-hidden bg-linear-to-b from-[#3a4854] to-[#28333e] border-t border-[#56626d] text-white">
    <svg viewBox="0 0 1200 24" preserveAspectRatio="none" className="absolute inset-0 w-full h-full blur-[2px]" aria-hidden="true">
      <path d="M352 0h60l80 24H386z" fill="#7895b3" opacity=".9" />
      <path d="M412 0h78l10 24h-10z" fill="#33414e" opacity=".8" />
      <path d="M490 0h8l14 24h-14z" fill="#5d7186" opacity=".5" />
      <path d="M620 24c40-14 80-22 150-20M760 24c20-14 50-14 70 0M880 24l20-24" stroke="#465a6c" strokeWidth="2" fill="none" />
      <path d="M1010 0h190v24h-190z" fill="#1f2a35" opacity=".4" />
    </svg>
    <button className="relative w-[34px] mr-[3px] flex justify-center" aria-label="Пуск">
      <svg viewBox="0 0 24 24" className="w-[23px] h-[23px]">
        <defs>
          <radialGradient id="orb" cx=".5" cy=".8" r=".8">
            <stop offset="0" stopColor="#56c4ec" />
            <stop offset=".5" stopColor="#2a6fa6" />
            <stop offset="1" stopColor="#7fa3bd" />
          </radialGradient>
        </defs>
        <circle cx="12" cy="12" r="11" fill="url(#orb)" stroke="#1c4160" strokeWidth=".8" />
        <path d="M6 7c2-1 3-1 5 0l-1 5c-2-1-3-1-5 0z" fill="#e8582b" />
        <path d="M12 7.500c2 1 3.500 1 6 0l-1 5c-2 1-4 1-6 0z" fill="#8cc63e" />
        <path d="M5 13c2-1 3-1 5 0l-1 4.500c-2-1-3-1-5 0z" fill="#3f9be0" />
        <path d="M11 13.500c2 1 3.500 1 6 0l-1 4.500c-2 1-4 1-6 0z" fill="#fbc52b" />
      </svg>
    </button>
    <div className="relative flex gap-[2px]">
      {apps.map((app) => (
        <button
          key={app.label}
          aria-label={app.label}
          className={clsx(
            'w-[37px] h-6 flex items-center justify-center',
            app.open && 'border border-[#8b959d] rounded-[2px] bg-linear-to-br',
            app.open && (app.active ? 'from-[#dfe3e6] via-[#8f999f] to-[#b9c0c4]' : 'from-[#8a9299] via-[#4b5660] to-[#39444e]')
          )}
        >
          <svg viewBox="0 0 24 24" className="w-5 h-5" fill="none">{app.art}</svg>
        </button>
      ))}
    </div>
    <div className="relative flex items-center self-stretch ml-auto">
      <button className="mr-[10px]">RU</button>
      <div className="flex gap-[5px]">
        {trayItems.map(([name, label]) => (
          <button key={name} aria-label={label}><Icon name={name} className="w-[10px] h-[10px]" /></button>
        ))}
      </div>
      <button className="w-[52px] leading-[10px] text-center">13:56<br />27.06.2019</button>
      <button className="w-[9px] h-full border-l border-[#7c8790] bg-linear-to-r from-[#55616b] to-[#1d2731]" aria-label="Показать рабочий стол" />
    </div>
  </footer>
);

const App = () => (
  <div className="flex flex-col h-screen overflow-hidden text-[7px] leading-none text-[#333] font-['Noto_Sans',sans-serif]">
    <MenuBar />
    <DocumentTabs />
    <Ribbon />
    <div className="flex flex-1 min-h-0">
      <Sidebar />
      <Viewport />
    </div>
    <Taskbar />
  </div>
);

export default App;
